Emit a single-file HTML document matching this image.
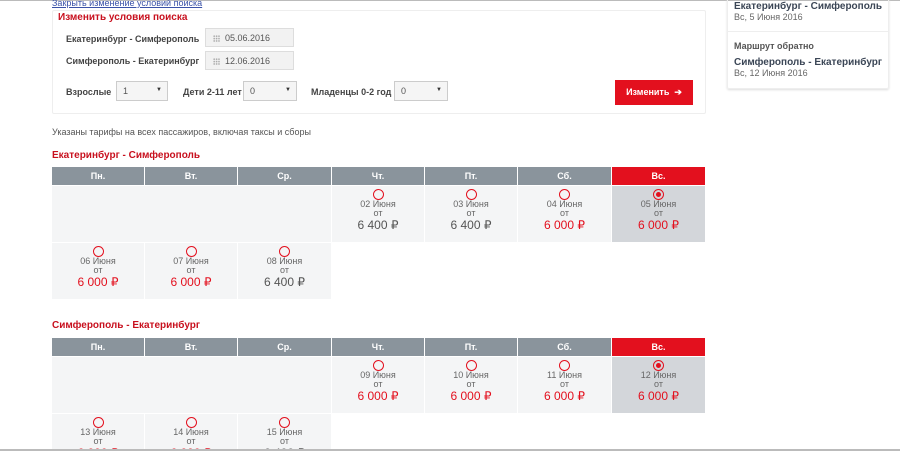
<!DOCTYPE html>
<html><head><meta charset="utf-8"><style>
*{margin:0;padding:0;box-sizing:border-box}
html{width:900px;height:451px;overflow:hidden}
body{width:900px;height:451px;overflow:hidden;background:#fff;font-family:"Liberation Sans","Noto Sans CJK SC",sans-serif;position:relative;color:#333}
.a{position:absolute}
.lbl{font-size:9px;font-weight:bold;color:#444}
.inp{position:absolute;height:19px;background:#f2f2f2;border:1px solid #ddd;font-size:9px;color:#555;padding:4px 0 0 19px}
.inp:before{content:"";position:absolute;left:7px;top:6px;width:7px;height:7px;background:radial-gradient(circle,#aaa 0.8px,transparent 1px) 0 0/2.4px 2.4px}
.sel{position:absolute;height:20px;background:#f5f5f5;border:1px solid #ccc;font-size:9px;color:#555;padding:4px 0 0 6px}
.sel:after{content:"▼";position:absolute;right:5px;top:5px;font-size:6px;color:#333}
.h{position:absolute;height:18px;background:#8a949c;color:#fff;font-size:9px;font-weight:bold;text-align:center;line-height:18px}
.h.r{background:#e3101e}
.c{position:absolute;background:#f4f5f6;text-align:center;font-size:9px;color:#666}
.c.s{background:#d3d6da}
.c i{display:block;width:11px;height:11px;border:1px solid #e3101e;border-radius:50%;margin:3px auto 0;position:relative}
.c.s i:after{content:"";position:absolute;left:2px;top:2px;width:5px;height:5px;border-radius:50%;background:#e3101e}
.c b{display:block;font-weight:normal;line-height:9px}
.c u{display:block;text-decoration:none;font-size:12px;line-height:14px;color:#555}
.c u.red{color:#e3101e}
.t{font-size:10px;font-weight:bold;color:#c8101e}
</style></head><body>
<div class="a" style="left:0;top:0;width:900px;height:1px;background:#bbb"></div>
<div class="a" style="left:52px;top:-2px;font-size:9px;color:#3a52a8;text-decoration:underline">Закрыть изменение условий поиска</div>
<div class="a" style="left:52px;top:10px;width:654px;height:104px;border:1px solid #eee;border-radius:2px"></div>
<div class="a t" style="left:58px;top:12px">Изменить условия поиска</div>
<div class="a lbl" style="left:66px;top:34px">Екатеринбург - Симферополь</div>
<div class="inp" style="left:205px;top:28px;width:89px">05.06.2016</div>
<div class="a lbl" style="left:66px;top:56px">Симферополь - Екатеринбург</div>
<div class="inp" style="left:205px;top:51px;width:89px">12.06.2016</div>
<div class="a lbl" style="left:66px;top:87px">Взрослые</div>
<div class="sel" style="left:116px;top:81px;width:52px">1</div>
<div class="a lbl" style="left:183px;top:87px">Дети 2-11 лет</div>
<div class="sel" style="left:243px;top:81px;width:54px">0</div>
<div class="a lbl" style="left:311px;top:87px">Младенцы 0-2 год</div>
<div class="sel" style="left:394px;top:81px;width:54px">0</div>
<div class="a" style="left:615px;top:80px;width:78px;height:25px;background:#e3101e;color:#fff;font-size:9px;font-weight:bold;line-height:25px;text-align:center">Изменить &nbsp;➔</div>
<div class="a" style="left:727px;top:-5px;width:162px;height:94px;border:1px solid #eee;border-radius:2px;box-shadow:0 1px 2px #ddd"></div>
<div class="a" style="left:727px;top:31px;width:162px;height:1px;background:#eee"></div>
<div class="a" style="left:734px;top:1px;font-size:10px;font-weight:bold;color:#3b4656">Екатеринбург - Симферополь</div>
<div class="a" style="left:734px;top:12px;font-size:9px;color:#666">Вс, 5 Июня 2016</div>
<div class="a" style="left:734px;top:41px;font-size:9px;font-weight:bold;color:#555">Маршрут обратно</div>
<div class="a" style="left:734px;top:57px;font-size:10px;font-weight:bold;color:#3b4656">Симферополь - Екатеринбург</div>
<div class="a" style="left:734px;top:68px;font-size:9px;color:#666">Вс, 12 Июня 2016</div>
<div class="a" style="left:52px;top:127px;font-size:9px;color:#555">Указаны тарифы на всех пассажиров, включая таксы и сборы</div>
<div class="a t" style="left:52px;top:150px">Екатеринбург - Симферополь</div>
<div class="a t" style="left:52px;top:320px">Симферополь - Екатеринбург</div>
<div class="a" id="g" style="left:0;top:0;width:900px;height:449px;overflow:hidden"></div>
<div class="a" style="left:0;top:449px;width:900px;height:2px;background:#bbb"></div>
<script>
var X=[52,145,238,332,425,518,612],W=[92,92,93,92,92,93,93],D=["Пн.","Вт.","Ср.","Чт.","Пт.","Сб.","Вс."];
var h="";
function tbl(y,r1,r2){
 for(var i=0;i<7;i++)h+='<div class="h'+(i==6?' r':'')+'" style="left:'+X[i]+'px;top:'+y+'px;width:'+W[i]+'px">'+D[i]+'</div>';
 h+='<div class="c" style="left:52px;top:'+(y+19)+'px;width:279px;height:56px"></div>';
 for(var i=0;i<4;i++){var d=r1[i];h+=cell(X[i+3],y+19,W[i+3],d,i==3);}
 for(var i=0;i<3;i++){h+=cell(X[i],y+76,W[i],r2[i],false);}
}
function cell(x,y,w,d,s){return '<div class="c'+(s?' s':'')+'" style="left:'+x+'px;top:'+y+'px;width:'+w+'px;height:56px"><i></i><b>'+d[0]+' Июня</b><b>от</b><u class="'+(d[1]=="6 000"?'red':'')+'">'+d[1]+' ₽</u></div>';}
tbl(167,[["02","6 400"],["03","6 400"],["04","6 000"],["05","6 000"]],[["06","6 000"],["07","6 000"],["08","6 400"]]);
tbl(338,[["09","6 000"],["10","6 000"],["11","6 000"],["12","6 000"]],[["13","6 000"],["14","6 000"],["15","6 400"]]);
document.getElementById("g").innerHTML=h;
</script>
</body></html>
